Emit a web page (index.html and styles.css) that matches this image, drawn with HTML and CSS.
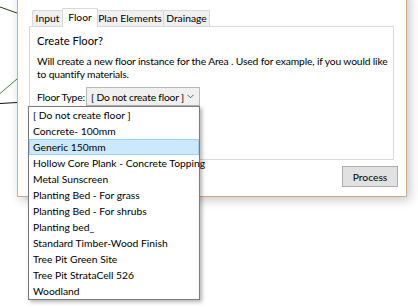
FILE: index.html
```html
<!DOCTYPE html>
<html>
<head>
<meta charset="utf-8">
<link rel="stylesheet" href="styles.css">
</head>
<body>
<div class="desk">
  <svg class="canvas" width="17" height="308" viewBox="0 0 17 308">
    <line x1="0" y1="7" x2="17" y2="13" stroke="#1f3f1f" stroke-width="1"/>
    <line x1="0" y1="93.5" x2="17" y2="79" stroke="#3a8a3a" stroke-width="1"/>
    <line x1="0" y1="103.5" x2="17" y2="102.5" stroke="#111" stroke-width="1"/>
  </svg>
  <div class="window">
    <div class="tabctl">
      <div class="tabs">
        <div class="tab first">Input</div>
        <div class="tab sel">Floor</div>
        <div class="tab">Plan Elements</div>
        <div class="tab">Drainage</div>
      </div>
      <div class="panel">
        <div class="heading">Create Floor?</div>
        <p class="desc">Will create a new floor instance for the Area . Used for example, if you would like<br>to quantify materials.</p>
        <div class="row">
          <span class="label">Floor Type:</span>
          <div class="combo">
            <span class="combo-text">[ Do not create floor ]</span>
            <svg class="chev" width="7" height="5" viewBox="0 0 7 5"><polyline points="0.5,0.8 3.5,3.8 6.5,0.8" fill="none" stroke="#606060" stroke-width="1"/></svg>
          </div>
        </div>
      </div>
    </div>
    <div class="actions">
      <button class="btn">Process</button>
    </div>
  </div>
  <ul class="droplist">
    <li class="item">[ Do not create floor ]</li>
    <li class="item">Concrete- 100mm</li>
    <li class="item hl">Generic 150mm</li>
    <li class="item">Hollow Core Plank - Concrete Topping</li>
    <li class="item">Metal Sunscreen</li>
    <li class="item">Planting Bed - For grass</li>
    <li class="item">Planting Bed - For shrubs</li>
    <li class="item">Planting bed_</li>
    <li class="item">Standard Timber-Wood Finish</li>
    <li class="item">Tree Pit Green Site</li>
    <li class="item">Tree Pit StrataCell 526</li>
    <li class="item">Woodland</li>
  </ul>
</div>
</body>
</html>
```
FILE: styles.css
```css
* { box-sizing: border-box; }
html, body {
  margin: 0;
  padding: 0;
  background: #ffffff;
}
body {
  width: 418px;
  height: 308px;
  overflow: hidden;
  font-family: Lato, "Noto Sans", sans-serif;
  font-size: 10.3px;
  color: #000;
}
.desk {
  position: relative;
  width: 418px;
  height: 308px;
}
.canvas {
  position: absolute;
  left: 0;
  top: 0;
}
.window {
  position: absolute;
  left: 17px;
  top: -10px;
  width: 390px;
  height: 207px;
  background: #ffffff;
  border: 1px solid #cfa98c;
  box-shadow: 3px 3px 10px rgba(0, 0, 0, 0.22);
  padding: 17px 8px 0 11px;
}
.tabctl {
  width: 365px;
}
.tabs {
  display: flex;
  align-items: flex-end;
  height: 18px;
  padding-left: 3px;
  position: relative;
  z-index: 2;
}
.tab {
  height: 16px;
  line-height: 15px;
  padding: 0;
  border: 1px solid #d9d9d9;
  border-bottom: none;
  background: #f0f0f0;
  margin-left: -1px;
  white-space: nowrap;
  text-align: center;
}
.tab.first { margin-left: 0; width: 31px; }
.tab.sel {
  height: 19px;
  margin-bottom: -1px;
  background: #ffffff;
  width: 36px;
  line-height: 16px;
  position: relative;
  z-index: 3;
  margin-left: -1px;
  margin-right: -1px;
}
.tab:nth-child(3) { width: 68px; }
.tab:nth-child(4) { width: 47px; }
.panel {
  height: 134px;
  border: 1px solid #d9d9d9;
  background: #ffffff;
  padding: 6px 0 0 7px;
}
.heading {
  font-size: 11.2px;
  line-height: 16px;
}
.desc {
  margin: 6px 0 0 0;
  line-height: 12.5px;
  white-space: nowrap;
  letter-spacing: -0.15px;
}
.row {
  display: flex;
  align-items: center;
  margin-top: 7px;
  letter-spacing: -0.2px;
}
.label {
  width: 49px;
  white-space: nowrap;
}
.combo {
  width: 114px;
  height: 19px;
  border: 1px solid #b9b9b9;
  background: #f0f0f0;
  display: flex;
  align-items: center;
  justify-content: space-between;
  padding: 0 5px 0 4px;
}
.combo-text { white-space: nowrap; }
.chev { display: block; }
.actions {
  display: flex;
  justify-content: flex-end;
  margin-top: 6px;
}
.btn {
  width: 56px;
  height: 21px;
  border: 1px solid #adadad;
  background: #e1e1e1;
  font: inherit;
  padding: 0;
  color: #000;
}
.droplist {
  position: absolute;
  left: 28px;
  top: 106px;
  width: 172px;
  margin: 0;
  padding: 0;
  list-style: none;
  background: #ffffff;
  border: 1px solid #7a7a7a;
  box-shadow: 2px 2px 4px rgba(0, 0, 0, 0.3);
  z-index: 5;
}
.item {
  height: 16px;
  line-height: 16px;
  padding-left: 4px;
  white-space: nowrap;
}
.item.hl {
  background: #cce8ff;
  border: 1px solid #99d1ff;
  line-height: 14px;
  padding-left: 3px;
}
```
